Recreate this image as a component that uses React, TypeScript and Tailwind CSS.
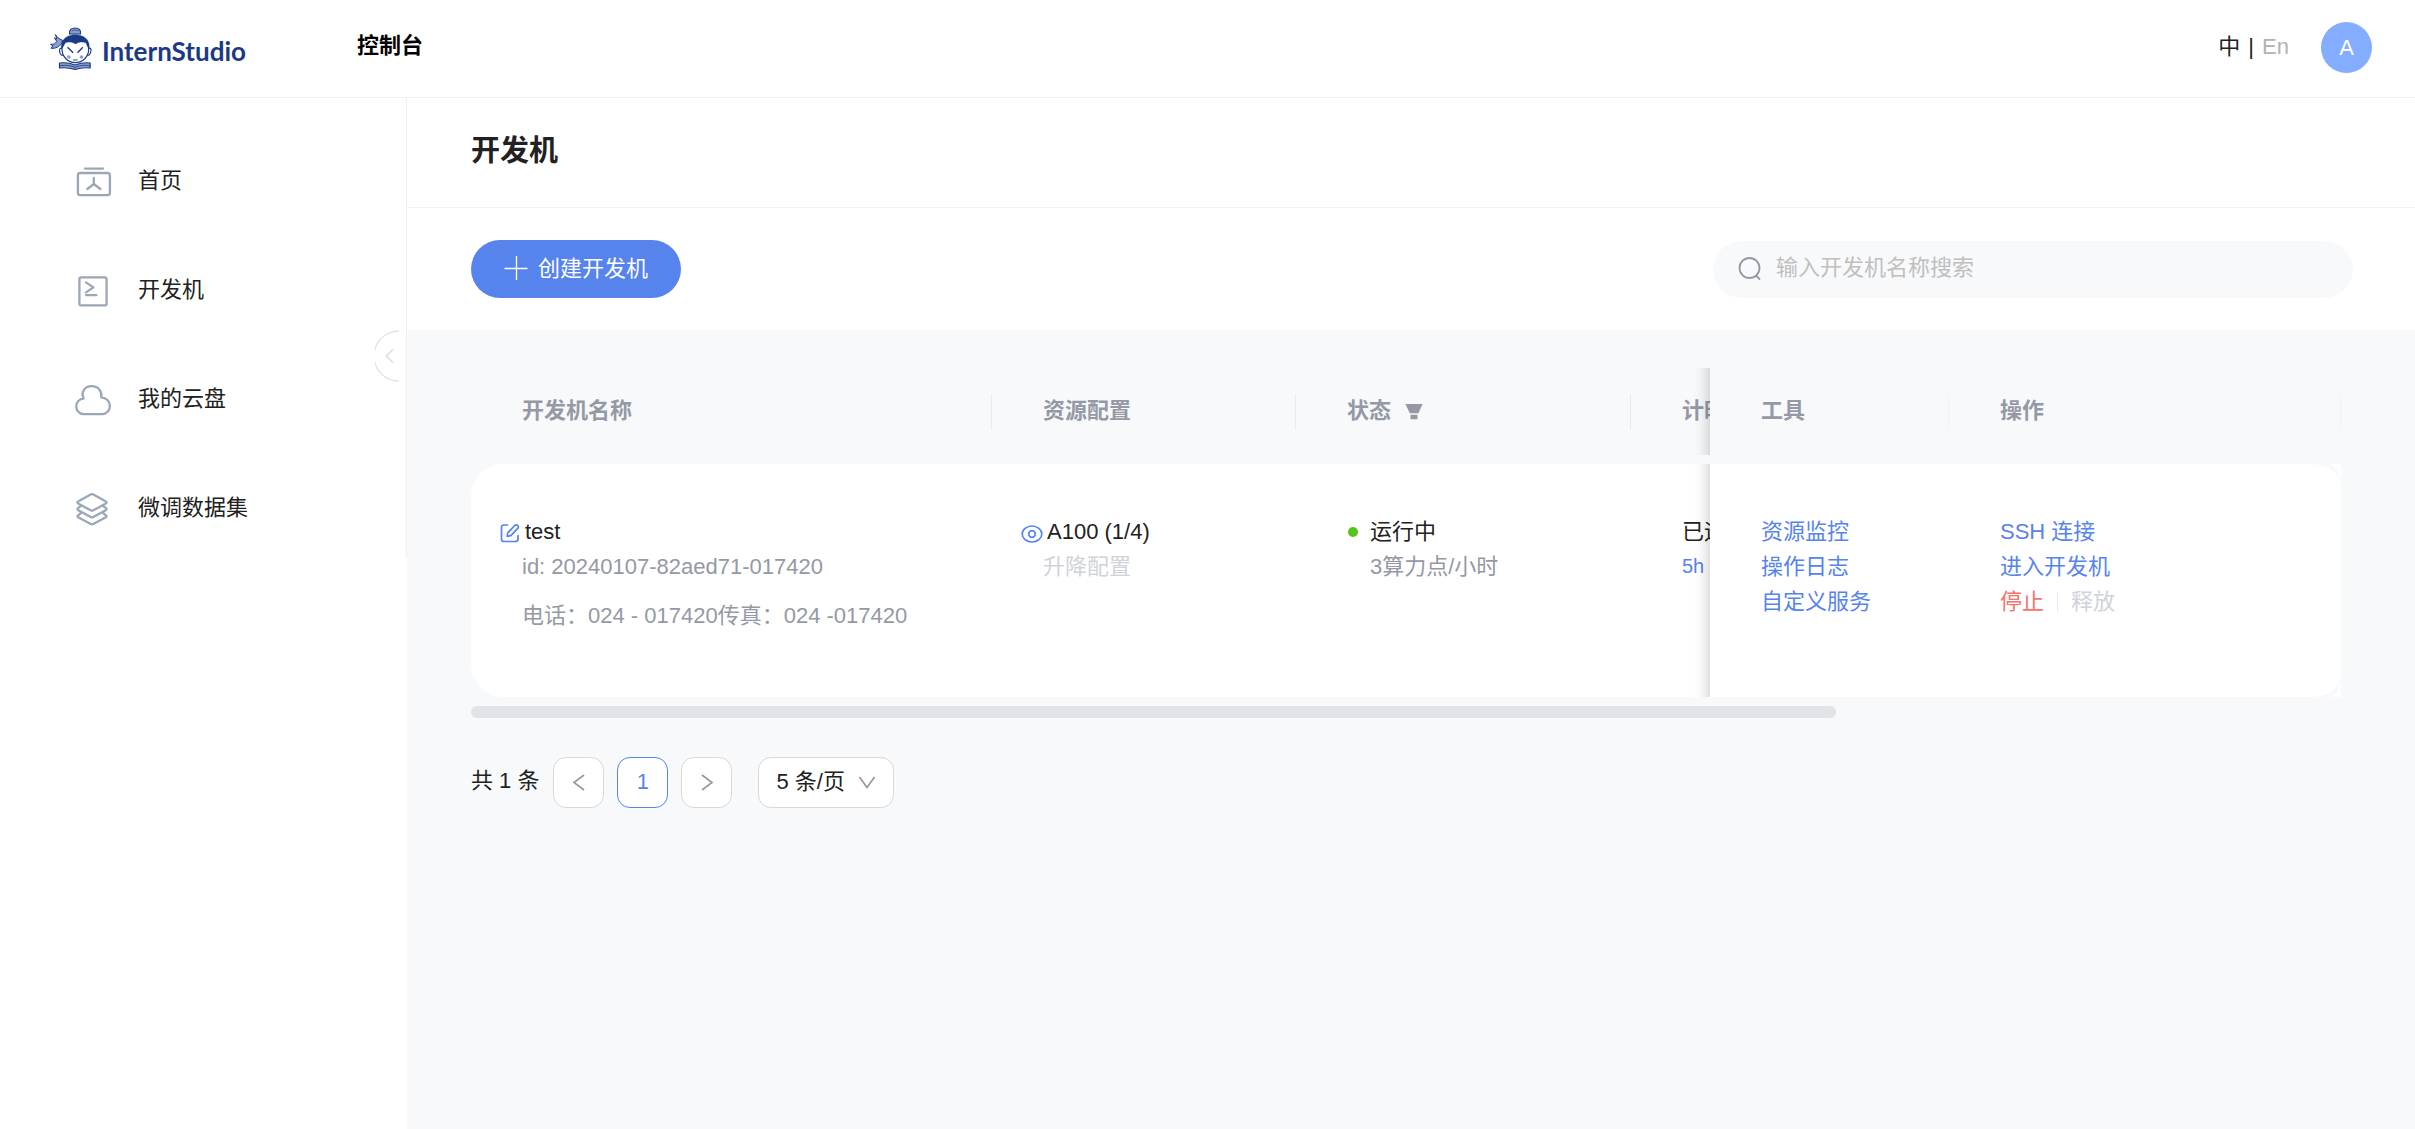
import { useState } from "react";
import type { ReactNode } from "react";

const menus = [
  { name: "首页", icon: <HomeIcon /> },
  { name: "开发机", icon: <TerminalIcon /> },
  { name: "我的云盘", icon: <CloudIcon /> },
  { name: "微调数据集", icon: <LayersIcon /> },
];

function MenuSvg({ children }: { children: ReactNode }) {
  return (
    <svg
      viewBox="0 0 40 40"
      className="w-10 h-10 shrink-0"
      fill="none"
      stroke="#9aa7b7"
      strokeWidth="2.3"
      strokeLinecap="round"
      strokeLinejoin="round"
    >
      {children}
    </svg>
  );
}

function HomeIcon() {
  return (
    <MenuSvg>
      <path d="M13 7.6h18" />
      <rect x="5.9" y="12" width="32" height="22.2" rx="2.4" />
      <path d="M21.8 17v6l-6.4 5M21.8 23l6.6 5" />
    </MenuSvg>
  );
}

function TerminalIcon() {
  return (
    <MenuSvg>
      <rect x="7.4" y="7.4" width="27.2" height="28" rx="2" />
      <path d="M14 12.4l7.4 5-7.4 5M14 25.2h10.4" />
    </MenuSvg>
  );
}

function CloudIcon() {
  return (
    <MenuSvg>
      <path d="M12 35.2C7.5 35.2 4.2 31.6 4.2 27.4C4.2 23 7.3 19.8 11.6 19.7C8.6 13 13 7.2 19.7 7.2C26.2 7.2 30.2 12 29.3 18.3C34.3 18.6 37.9 22.3 37.9 26.9C37.9 31.6 34.4 35.2 29.9 35.2Z" />
    </MenuSvg>
  );
}

function LayersIcon() {
  return (
    <MenuSvg>
      <path d="M18.6 6.600q1.400-.8 2.800 0l12.500 7q1.400.9 0 1.800l-12.500 6.800q-1.400.8-2.800 0l-12.500-6.800q-1.400-.9 0-1.800z" />
      <path d="M9 17.900l-3 2.300q-1.200 1.100.2 2l12.500 6.800q1.300.7 2.600 0l12.500-6.800q1.400-.9.2-2l-3-2.300" />
      <path d="M9 25l-3 2.300q-1.200 1.100.2 2l12.500 6.800q1.300.7 2.600 0l12.500-6.800q1.400-.9.2-2l-3-2.300" />
    </MenuSvg>
  );
}

function Logo() {
  return (
    <svg viewBox="30 34 125 129" className="w-[42px] h-[43px]" stroke="#1a3a86" strokeLinejoin="round">
      {/* ribbon */}
      <path d="M66 73C56 70 50 64 46 57L50 70C44 66 42 66 43 68L50 77C44 86 38 86 31 86L38 90L33 98C46 99 56 94 66 82Z" fill="#8c9fcc" strokeWidth="3" />
      {/* bun */}
      <path d="M88 55C86 42 94 37 105 37C116 37 123 42 121 55Z" fill="#8c9fcc" strokeWidth="3.5" />
      <path d="M95 46C101 42 109 42 115 46" fill="none" strokeWidth="2" />
      {/* ears and face */}
      <path d="M66 98C58 95 57 104 59 111C61 118 66 120 69 118M146 98C153 95 154 104 151 111C149 118 145 120 142 118" fill="#fff" strokeWidth="3.5" />
      <circle cx="105.5" cy="101" r="40" fill="#fff" strokeWidth="3.5" />
      {/* hair */}
      <path d="M64 99C60 72 80 57 105 57C131 57 151 72 147 99C140 92 140 85 137 81C128 78 117 78 106 85C94 78 83 78 75 82C72 88 70 94 64 99Z" fill="#1a3a86" strokeWidth="1" />
      {/* eyes, cheeks, mouth */}
      <path d="M82 95L99 111M128 95L112 111" fill="none" strokeWidth="4" />
      <circle cx="86" cy="124" r="5.5" fill="#8c9fcc" stroke="none" />
      <circle cx="124" cy="124" r="5.5" fill="#8c9fcc" stroke="none" />
      <path d="M99 133H112" strokeWidth="3" />
      {/* book */}
      <path d="M58 142C76 140 92 143 105 148C118 143 134 140 150 142V157C133 155 118 157 105 161C91 157 76 155 58 157Z" fill="#8c9fcc" strokeWidth="3.5" />
      <path d="M60 150C78 147 94 150 105 155C116 150 132 147 149 150" fill="none" strokeWidth="2.5" />
    </svg>
  );
}

function HeadCell({ children, light }: { children?: ReactNode; light?: boolean }) {
  return (
    <div
      className={`h-9 pl-[51px] pb-0.5 flex items-center border-r whitespace-nowrap ${
        light ? "border-[#f1f2f5]" : "border-[#e8eaed]"
      }`}
    >
      {children}
    </div>
  );
}

// right corner of the row card
function Corner({ className }: { className: string }) {
  return (
    <svg viewBox="0 0 32 32" className={`absolute right-0 w-8 h-8 ${className}`}>
      <path d="M0 0C18 0 32 8 32 24V16C31 10 28 4 22 0Z" fill="#f8f9fb" />
    </svg>
  );
}

function StickyShadow() {
  return (
    <div className="absolute top-0 bottom-0 right-full w-12 pointer-events-none shadow-[inset_-16px_0_13px_-13px_rgba(5,5,5,0.18)]" />
  );
}

export default function App() {
  const [keyword, setKeyword] = useState("");
  const [pageSize, setPageSize] = useState("5");

  return (
    <div className="min-h-screen flex flex-col bg-white text-[22px] leading-[35px] text-[#212121] font-['Liberation_Sans','Noto_Sans_CJK_SC',sans-serif]">
      <header className="h-[98px] shrink-0 border-b border-[#f0f1f2] flex items-center justify-between pl-[50px] pr-[43px]">
        <div className="flex items-center">
          <a href="#home" className="flex items-center gap-2.5 w-[307px]">
            <Logo />
            <span className="pt-1.5 text-[26px] font-bold text-[#1a3a86] font-['Lato',sans-serif]">
              InternStudio
            </span>
          </a>
          <a href="#console" className="pb-1.5 font-bold text-black">
            控制台
          </a>
        </div>
        <div className="flex items-center pb-0.5">
          <div className="flex items-center gap-2 pb-0.5">
            <button className="cursor-pointer">中</button>
            <span>|</span>
            <button className="text-[#b3b3b3] cursor-pointer">En</button>
          </div>
          <button className="ml-8 w-[51px] h-[51px] rounded-full bg-[#85adff] text-white cursor-pointer">
            A
          </button>
        </div>
      </header>

      <div className="flex flex-1">
        <aside className="relative w-[407px] shrink-0">
          <nav className="flex flex-col gap-16 pt-[60px] pb-7 pl-[72px] border-r border-[#eff0f2]">
            {menus.map((m) => (
              <a key={m.name} href="#menu" className="h-[45px] flex items-center gap-[26px]">
                {m.icon}
                <span>{m.name}</span>
              </a>
            ))}
          </nav>
          <button aria-label="收起" className="absolute right-2 top-[232px] cursor-pointer">
            <svg viewBox="0 0 24 52" className="w-6 h-[52px]" fill="none" stroke="#e0e4e9" strokeWidth="1.5">
              <path d="M24 1A25 25 0 0 0 24 51" />
              <path d="M18 19.5l-6.600 6.500 6.600 6.500" strokeWidth="2" />
            </svg>
          </button>
        </aside>

        <main className="flex-1 min-w-0 bg-[#f8f9fb]">
          <div className="bg-white">
            <div className="h-[110px] pl-16 pb-0.5 flex items-center border-b border-[#f0f1f2]">
              <h1 className="text-[29px] font-bold">开发机</h1>
            </div>
            <div className="py-8 pl-16 pr-[62px] flex items-center justify-between">
              <button className="h-[58px] px-[33px] pb-0.5 rounded-full bg-[#5683ec] text-white flex items-center gap-2.5 cursor-pointer">
                <svg viewBox="0 0 24 24" className="w-6 h-6" fill="none" stroke="#fff" strokeWidth="1.3">
                  <path d="M12.5 0v24M.5 12.5h23" />
                </svg>
                创建开发机
              </button>
              <label className="h-[57px] w-[640px] pl-6 pr-6 rounded-full bg-[#f8f9fb] flex items-center gap-[13px]">
                <svg viewBox="0 0 26 26" className="w-[26px] h-[26px]" fill="none" stroke="#9499a5" strokeWidth="1.8">
                  <circle cx="12.500" cy="12" r="10" />
                  <path d="M19 19.500l4 4" />
                </svg>
                <input
                  aria-label="搜索"
                  className="flex-1 pb-[3px] bg-transparent outline-none placeholder:text-[#bfbfbf]"
                  placeholder="输入开发机名称搜索"
                  value={keyword}
                  onChange={(e) => setKeyword(e.target.value)}
                />
              </label>
            </div>
          </div>

          <div className="pt-[29px] pl-16 pr-[74px]">
            <div className="overflow-x-hidden">
              <table className="table-fixed w-full min-w-[2560px] border-separate border-spacing-x-0 border-spacing-y-[9px] text-left">
                <colgroup>
                  <col className="w-[521px]" />
                  <col className="w-[304px]" />
                  <col className="w-[335px]" />
                  <col />
                  <col className="w-[239px]" />
                  <col className="w-[392px]" />
                </colgroup>
                <thead className="text-[#9499a5]">
                  <tr className="h-[87px]">
                    <th className="p-0">
                      <HeadCell>开发机名称</HeadCell>
                    </th>
                    <th className="p-0">
                      <HeadCell>资源配置</HeadCell>
                    </th>
                    <th className="p-0">
                      <HeadCell>
                        状态
                        <button aria-label="筛选" className="ml-3.5 cursor-pointer">
                          <svg viewBox="0 0 18 18" className="w-[18px] h-[18px]" fill="#9499a5">
                            <path d="M.4 2h17.200l-4.200 9.200H4.800zM5.500 12.700h7v4.600h-7z" />
                          </svg>
                        </button>
                      </HeadCell>
                    </th>
                    <th className="p-0">
                      <HeadCell>计时</HeadCell>
                    </th>
                    <th className="p-0 sticky right-[392px] bg-[#f8f9fb]">
                      <StickyShadow />
                      <HeadCell light>工具</HeadCell>
                    </th>
                    <th className="p-0 sticky right-0 bg-[#f8f9fb]">
                      <HeadCell light>操作</HeadCell>
                    </th>
                  </tr>
                </thead>
                <tbody>
                  <tr className="h-[233px] align-top whitespace-nowrap">
                    <td className="p-0 pt-[50px] bg-white rounded-l-[32px]">
                      <div className="pl-[29px] flex items-center gap-[5px]">
                        <button aria-label="编辑" className="pt-0.5 cursor-pointer">
                          <svg viewBox="0 0 20 20" className="w-5 h-5" fill="none" stroke="#5683ec" strokeWidth="1.7" strokeLinecap="round" strokeLinejoin="round">
                            <path d="M7.500 2H4Q1.500 2 1.500 4.500V16Q1.500 18.500 4 18.500H15.500Q18 18.500 18 16V12.500" />
                            <path d="M7.200 13.400L7.800 9.800L14.800 2.500Q16.400 1.200 17.800 2.500Q19 4 17.700 5.400L10.800 12.600Z" />
                          </svg>
                        </button>
                        test
                      </div>
                      <div className="pl-[51px] text-[#9499a5]">
                        <p>id: 20240107-82aed71-017420</p>
                        <p className="mt-3.5">电话：024 - 017420传真：024 -017420</p>
                      </div>
                    </td>
                    <td className="p-0 pt-[50px] bg-white">
                      <div className="pl-[29px] flex items-center gap-1">
                        <svg viewBox="0 0 22 20" className="w-[22px] h-5 mt-0.5" fill="none" stroke="#5683ec" strokeWidth="1.7">
                          <ellipse cx="11" cy="11" rx="9.800" ry="8" />
                          <circle cx="11" cy="11" r="3.300" />
                        </svg>
                        A100 (1/4)
                      </div>
                      <button disabled className="ml-[51px] block text-[#d0d3d9]">
                        升降配置
                      </button>
                    </td>
                    <td className="p-0 pt-[50px] bg-white">
                      <div className="pl-[52px] flex items-center gap-3">
                        <span className="w-2.5 h-2.5 rounded-full bg-[#52c41a]" />
                        运行中
                      </div>
                      <p className="pl-[74px] text-[#9499a5]">3算力点/小时</p>
                    </td>
                    <td className="p-0 pt-[50px] pl-[51px] bg-white">
                      <p>已运行</p>
                      <p className="text-[20px] text-[#5683ec]">5h</p>
                    </td>
                    <td className="p-0 pt-[50px] pl-[51px] bg-white sticky right-[392px] text-[#5683ec]">
                      <StickyShadow />
                      <a href="#monitor" className="block">资源监控</a>
                      <a href="#log" className="block">操作日志</a>
                      <a href="#service" className="block">自定义服务</a>
                    </td>
                    <td className="p-0 pt-[50px] pl-[51px] bg-white sticky right-0 text-[#5683ec]">
                      <Corner className="top-0" />
                      <Corner className="bottom-0 -scale-y-100" />
                      <a href="#ssh" className="block">SSH 连接</a>
                      <a href="#enter" className="block">进入开发机</a>
                      <div className="flex items-center">
                        <button className="text-[#f5736d] cursor-pointer">停止</button>
                        <span className="mx-[13px] w-px h-5 bg-[#e8eaed]" />
                        <button disabled className="text-[#d0d3d9]">释放</button>
                      </div>
                    </td>
                  </tr>
                </tbody>
              </table>
            </div>
            <div className="h-3 w-[73%] rounded-full bg-[#e0e3e8]" />

            <div className="mt-[39px] flex items-center">
              <span className="pb-1">共 1 条</span>
              <div className="ml-3.5 flex gap-[13px]">
                <button aria-label="上一页" className="w-[51px] h-[51px] rounded-[13px] border border-[#d9d9d9] bg-white flex items-center justify-center">
                  <svg viewBox="0 0 16 18" className="w-4 h-[18px]" fill="none" stroke="#9499a5" strokeWidth="1.700">
                    <path d="M13 1L3 8.500l10 7.500" />
                  </svg>
                </button>
                <button className="w-[51px] h-[51px] pb-0.5 rounded-[13px] border border-[#5683ec] bg-white text-[#5683ec]">
                  1
                </button>
                <button aria-label="下一页" className="w-[51px] h-[51px] rounded-[13px] border border-[#d9d9d9] bg-white flex items-center justify-center">
                  <svg viewBox="0 0 16 18" className="w-4 h-[18px]" fill="none" stroke="#9499a5" strokeWidth="1.700">
                    <path d="M3 1L13 8.500L3 16" />
                  </svg>
                </button>
              </div>
              <div className="relative ml-[26px]">
                <select
                  aria-label="每页条数"
                  className="appearance-none w-[136px] h-[51px] pl-[17px] pr-10 pb-0.5 rounded-[13px] border border-[#d9d9d9] bg-white"
                  value={pageSize}
                  onChange={(e) => setPageSize(e.target.value)}
                >
                  <option value="5">5 条/页</option>
                  <option value="10">10 条/页</option>
                  <option value="20">20 条/页</option>
                </select>
                <svg viewBox="0 0 18 14" className="absolute right-[18px] top-[19px] w-[18px] h-3.5 pointer-events-none" fill="none" stroke="#9499a5" strokeWidth="1.700">
                  <path d="M1.500 1L9 11.500L16.500 1" />
                </svg>
              </div>
            </div>
          </div>
        </main>
      </div>
    </div>
  );
}
